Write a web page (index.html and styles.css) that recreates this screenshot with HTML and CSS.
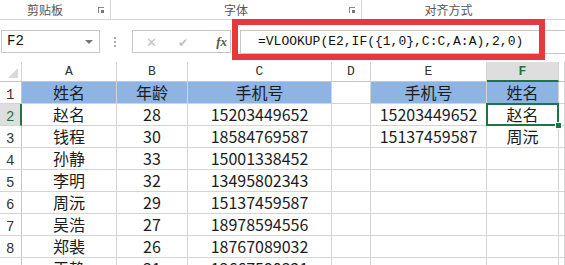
FILE: index.html
```html
<!DOCTYPE html>
<html lang="zh-CN">
<head>
    <meta charset="UTF-8">
    <meta name="viewport" content="width=device-width, initial-scale=1.0">
    <title>VLOOKUP 反向查找</title>
    <link rel="stylesheet" href="styles.css">
</head>
<body>
    <div class="ribbon">
        <div class="group g-clip">剪贴板<span class="launcher"></span></div>
        <div class="group g-font">字体<span class="launcher"></span></div>
        <div class="group g-align">对齐方式</div>
    </div>

    <div class="fbar">
        <div class="namebox">F2<span class="caret"></span></div>
        <div class="grip"></div>
        <div class="fbtns">
            <span class="btn-x">&#x2715;</span>
            <span class="btn-ok">&#x2714;</span>
            <span class="btn-fx">fx</span>
        </div>
        <div class="finput">=VLOOKUP(E2,IF({1,0},C:C,A:A),2,0)</div>
        <div class="mark"></div>
    </div>

    <div class="sheet">
        <div class="corner"><span class="tri"></span></div>
        <div class="colhead">A</div>
        <div class="colhead">B</div>
        <div class="colhead">C</div>
        <div class="colhead">D</div>
        <div class="colhead">E</div>
        <div class="colhead active">F</div>
        <div class="colhead"></div>

        <div class="rowhead">1</div>
        <div class="cell th">姓名</div>
        <div class="cell th">年龄</div>
        <div class="cell th">手机号</div>
        <div class="cell"></div>
        <div class="cell th">手机号</div>
        <div class="cell th">姓名</div>
        <div class="cell"></div>

        <div class="rowhead active">2</div>
        <div class="cell">赵名</div>
        <div class="cell">28</div>
        <div class="cell">15203449652</div>
        <div class="cell"></div>
        <div class="cell">15203449652</div>
        <div class="cell selected">赵名</div>
        <div class="cell"></div>

        <div class="rowhead">3</div>
        <div class="cell">钱程</div>
        <div class="cell">30</div>
        <div class="cell">18584769587</div>
        <div class="cell"></div>
        <div class="cell">15137459587</div>
        <div class="cell">周沅</div>
        <div class="cell"></div>

        <div class="rowhead">4</div>
        <div class="cell">孙静</div>
        <div class="cell">33</div>
        <div class="cell">15001338452</div>
        <div class="cell"></div>
        <div class="cell"></div>
        <div class="cell"></div>
        <div class="cell"></div>

        <div class="rowhead">5</div>
        <div class="cell">李明</div>
        <div class="cell">32</div>
        <div class="cell">13495802343</div>
        <div class="cell"></div>
        <div class="cell"></div>
        <div class="cell"></div>
        <div class="cell"></div>

        <div class="rowhead">6</div>
        <div class="cell">周沅</div>
        <div class="cell">29</div>
        <div class="cell">15137459587</div>
        <div class="cell"></div>
        <div class="cell"></div>
        <div class="cell"></div>
        <div class="cell"></div>

        <div class="rowhead">7</div>
        <div class="cell">吴浩</div>
        <div class="cell">27</div>
        <div class="cell">18978594556</div>
        <div class="cell"></div>
        <div class="cell"></div>
        <div class="cell"></div>
        <div class="cell"></div>

        <div class="rowhead">8</div>
        <div class="cell">郑裴</div>
        <div class="cell">26</div>
        <div class="cell">18767089032</div>
        <div class="cell"></div>
        <div class="cell"></div>
        <div class="cell"></div>
        <div class="cell"></div>

        <div class="rowhead">9</div>
        <div class="cell">王静</div>
        <div class="cell">31</div>
        <div class="cell">13667590321</div>
        <div class="cell"></div>
        <div class="cell"></div>
        <div class="cell"></div>
        <div class="cell"></div>
    </div>
</body>
</html>
```

FILE: styles.css
```css
body {
    margin: 0;
    width: 565px;
    height: 265px;
    overflow: hidden;
    background-color: #fff;
    font-family: "Noto Sans CJK SC", "Noto Sans", sans-serif;
    color: #222;
}

/* ribbon group captions */
.ribbon {
    display: flex;
    height: 19px;
    border-bottom: 1px solid #d5d5d5;
    background-color: #fff;
    font-size: 12px;
    color: #555;
}
.group {
    position: relative;
    display: flex;
    align-items: center;
    justify-content: center;
    border-right: 1px solid #dadada;
    box-sizing: border-box;
    height: 19px;
    line-height: 19px;
}
.g-clip {
    width: 111px;
    padding-right: 20px;
}
.g-font {
    width: 251px;
}
.g-align {
    flex: 1;
    border-right: none;
    padding-right: 30px;
}
.launcher {
    position: absolute;
    right: 6px;
    top: 7px;
    width: 5px;
    height: 5px;
    border-left: 1px solid #888;
    border-top: 1px solid #888;
}
.launcher::after {
    content: "";
    position: absolute;
    left: 2px;
    top: 2px;
    width: 3px;
    height: 3px;
    background-color: #777;
}

/* formula bar */
.fbar {
    position: relative;
    display: flex;
    align-items: center;
    height: 42px;
    padding-top: 1px;
    box-sizing: border-box;
}
.namebox {
    position: relative;
    width: 99px;
    height: 23px;
    margin-left: 1px;
    border: 1px solid #c6c6c6;
    box-sizing: border-box;
    font-family: "Liberation Mono", monospace;
    font-size: 14px;
    line-height: 21px;
    padding-left: 5px;
    color: #111;
}
.caret {
    position: absolute;
    right: 6px;
    top: 9px;
    border-left: 4px solid transparent;
    border-right: 4px solid transparent;
    border-top: 4px solid #777;
}
.grip {
    width: 2px;
    height: 10px;
    margin: 0 14px 0 14px;
    border-left: 2px dotted #aaa;
}
.fbtns {
    display: flex;
    align-items: center;
    width: 99px;
    height: 23px;
    border: 1px solid #c6c6c6;
    box-sizing: border-box;
    color: #c2c2c2;
    font-size: 13px;
}
.btn-x {
    margin-left: 13px;
}
.btn-ok {
    margin-left: 21px;
    font-size: 12px;
}
.btn-fx {
    margin-left: auto;
    margin-right: 3px;
    font-family: "Liberation Serif", serif;
    font-style: italic;
    font-weight: bold;
    color: #555;
    font-size: 13px;
}
.finput {
    flex: 1;
    height: 24px;
    margin-left: 9px;
    border: 1px solid #c6c6c6;
    border-right: none;
    box-sizing: border-box;
    padding-left: 17px;
    font-family: "Liberation Mono", monospace;
    font-size: 13px;
    line-height: 22px;
    color: #111;
    white-space: nowrap;
}
.mark {
    position: absolute;
    left: 232px;
    top: -1px;
    width: 313px;
    height: 41px;
    border: 6px solid #e5393b;
    box-sizing: border-box;
}

/* worksheet grid */
.sheet {
    display: grid;
    grid-template-columns: 22px 95px 71px 144px 39px 116px 72px 1fr;
    grid-template-rows: 20px;
    grid-auto-rows: 22px;
}
.corner {
    position: relative;
    border-right: 1px solid #d4d4d4;
    border-bottom: 1px solid #c6c6c6;
}
.tri {
    position: absolute;
    right: 3px;
    bottom: 3px;
    border-left: 10px solid transparent;
    border-bottom: 10px solid #d9d9d9;
}
.colhead {
    border-right: 1px solid #d4d4d4;
    border-bottom: 1px solid #c6c6c6;
    box-sizing: border-box;
    text-align: center;
    font-family: "Liberation Mono", monospace;
    font-size: 13px;
    line-height: 20px;
    color: #333;
}
.colhead.active {
    background-color: #dedede;
    border-bottom: 2px solid #217346;
    color: #217346;
    font-weight: bold;
    line-height: 19px;
}
.rowhead {
    border-right: 1px solid #c6c6c6;
    border-bottom: 1px solid #d4d4d4;
    box-sizing: border-box;
    padding-left: 6px;
    font-family: "Liberation Mono", monospace;
    font-size: 14px;
    line-height: 26px;
    color: #333;
}
.rowhead.active {
    background-color: #dedede;
    border-right: 2px solid #217346;
    color: #217346;
}
.cell {
    border-right: 1px solid #d4d4d4;
    border-bottom: 1px solid #d4d4d4;
    box-sizing: border-box;
    text-align: center;
    font-size: 16px;
    line-height: 21px;
    color: #1c1c1c;
    white-space: nowrap;
}
.cell.th {
    background-color: #8db4e2;
}
.cell.selected {
    position: relative;
    border: 2px solid #217346;
    line-height: 18px;
    margin: -1px 0 0 -1px;
    width: 73px;
}
.cell.selected::after {
    content: "";
    position: absolute;
    right: -5px;
    bottom: -5px;
    width: 5px;
    height: 5px;
    background-color: #217346;
    border: 1px solid #fff;
}
```
